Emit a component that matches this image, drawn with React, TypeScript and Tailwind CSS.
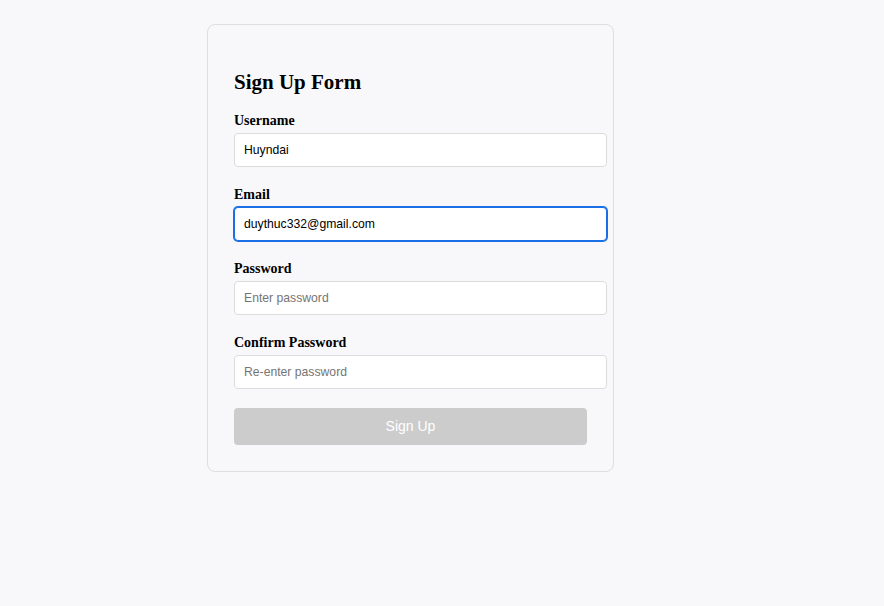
import { useState } from "react";

function Field({
  label,
  value,
  placeholder,
  type = "text",
  focused = false,
  last = false,
  onChange,
}: {
  label: string;
  value: string;
  placeholder: string;
  type?: string;
  focused?: boolean;
  last?: boolean;
  onChange: (v: string) => void;
}) {
  return (
    <div className={last ? "mb-[19px]" : "mb-[20px]"}>
      <label className="block text-[14px] leading-[16px] font-bold text-black mb-[4px] font-['Liberation_Serif',serif]">
        {label}
      </label>
      <input
        type={type}
        value={value}
        placeholder={placeholder}
        onChange={(e) => onChange(e.target.value)}
        className={
          focused
            ? "w-[373px] h-[34px] px-[9px] rounded-[4px] bg-white border border-[#1a6fe6] ring-1 ring-[#1a6fe6] outline-none text-[12.2px] text-black font-['Liberation_Sans',sans-serif] placeholder:text-[#757575]"
            : "w-[373px] h-[34px] px-[9px] rounded-[4px] bg-white border border-[#dcdcdc] outline-none text-[12.2px] text-black font-['Liberation_Sans',sans-serif] placeholder:text-[#757575]"
        }
      />
    </div>
  );
}

export default function App() {
  const [username, setUsername] = useState("Huyndai");
  const [email, setEmail] = useState("duythuc332@gmail.com");
  const [password, setPassword] = useState("");
  const [confirm, setConfirm] = useState("");

  return (
    <div className="min-h-screen w-full bg-[#f8f8fa] pt-[24px]">
      <div className="ml-[207px] w-[407px] rounded-[8px] border border-[#dedee0] bg-[#f8f8fa] px-[26px] pt-[45px] pb-[26px]">
        <h2 className="text-[21px] leading-[24px] font-bold text-black mb-[19px] font-['Liberation_Serif',serif]">
          Sign Up Form
        </h2>
        <Field label="Username" value={username} placeholder="Enter username" onChange={setUsername} />
        <Field label="Email" value={email} placeholder="Enter email" focused onChange={setEmail} />
        <Field
          label="Password"
          type="password"
          value={password}
          placeholder="Enter password"
          onChange={setPassword}
        />
        <Field
          label="Confirm Password"
          type="password"
          value={confirm}
          placeholder="Re-enter password"
          last
          onChange={setConfirm}
        />
        <button
          disabled
          className="w-[353px] h-[37px] rounded-[4px] bg-[#cccccc] text-white text-[14px] font-['Liberation_Sans',sans-serif]"
        >
          Sign Up
        </button>
      </div>
    </div>
  );
}
